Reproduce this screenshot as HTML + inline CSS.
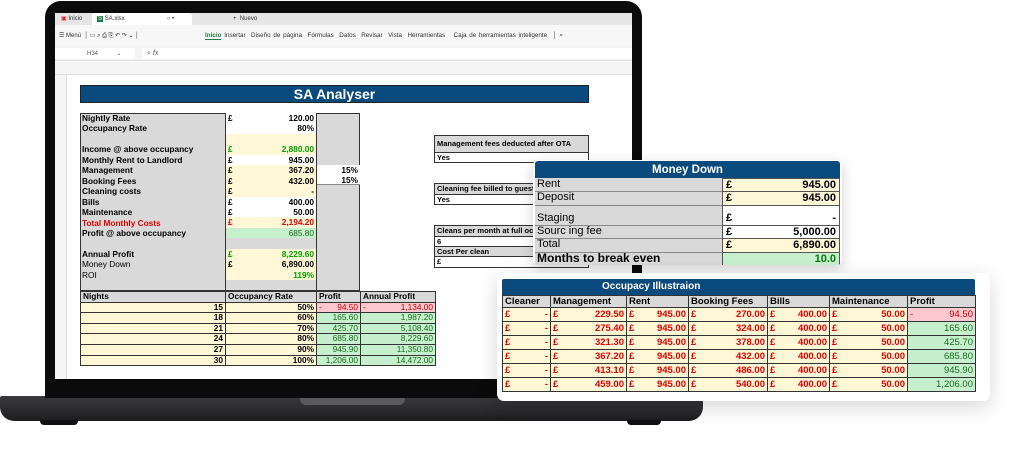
<!DOCTYPE html>
<html><head><meta charset="utf-8"><style>
*{margin:0;padding:0;box-sizing:border-box}
body{width:1035px;height:474px;background:#fff;position:relative;overflow:hidden;font-family:"Liberation Sans",Arial,sans-serif}
.a{position:absolute}
.t{font-size:8px;font-weight:bold;color:#000;white-space:nowrap;overflow:hidden;line-height:10px}
.c{position:absolute;border:1px solid #333;font-size:8.5px;font-weight:bold;line-height:9px;padding:0 2px;white-space:nowrap;overflow:hidden}
.y{background:#fff7d6}.g{background:#c6efce}.gr{background:#d9d9d9}.w{background:#fff}.pk{background:#ffc7ce}
.red{color:#e00000}.grn{color:#00a000}.dg{color:#1a6b1a}
.f{display:flex;justify-content:space-between;padding:0 2px;overflow:hidden;white-space:nowrap}
.lc div{height:10.45px;line-height:10.45px}
table{border-collapse:collapse;position:absolute}
td{border:1.5px solid #333;font-weight:bold;white-space:nowrap;padding:0 2px}
td.r{text-align:right}
td .l{float:left}
</style></head><body>
<!-- laptop base -->
<div class="a" style="left:0;top:396px;width:703px;height:25px;background:linear-gradient(#3a3a3e,#2a2a2d 60%,#1c1c1e);border-radius:2px 2px 14px 14px"></div>
<div class="a" style="left:300px;top:396px;width:105px;height:9px;background:#5a5a5e;border-radius:0 0 6px 6px"></div>
<div class="a" style="left:40px;top:420px;width:38px;height:5px;background:#111;border-radius:0 0 4px 4px"></div>
<div class="a" style="left:627px;top:420px;width:34px;height:5px;background:#111;border-radius:0 0 4px 4px"></div>
<!-- bezel -->
<div class="a" style="left:45px;top:1px;width:597px;height:397px;background:#0b0b0b;border-radius:16px 16px 0 0"></div>
<!-- screen -->
<div class="a" style="left:55px;top:13px;width:577px;height:366px;background:#fff;overflow:hidden">
 <div class="a" style="left:0;top:0;width:577px;height:12px;background:#e6e6e6"></div>
 <div class="a" style="left:37px;top:0;width:100px;height:12px;background:#fff;border-radius:3px 3px 0 0"></div>
 <div class="a t" style="left:6px;top:1px;font-size:6px;font-weight:normal;color:#333"><span style="color:#d22">▣</span> Inicio</div>
 <div class="a t" style="left:42px;top:1px;font-size:6px;font-weight:normal;color:#333"><span style="background:#1e7b45;color:#fff;padding:0 1px">S</span> SA.xlsx<span style="margin-left:42px">○ •</span></div>
 <div class="a t" style="left:178px;top:1px;font-size:6px;font-weight:normal;color:#333">+ &nbsp;Nuevo</div>
 <div class="a" style="left:0;top:12px;width:577px;height:21px;background:#f7f7f7"></div>
 <div class="a t" style="left:4px;top:18px;font-size:6px;font-weight:normal;color:#333">☰ Menú &nbsp;│ ▭ ⌕ ⎙ ⎘ ↶ ↷ ⌄ │</div>
 <div class="a t" style="left:150px;top:18px;font-size:6.3px;font-weight:normal;color:#333;word-spacing:1px"><span style="color:#1e7b45;font-weight:bold;border-bottom:1px solid #1e7b45">Inicio</span> Insertar &nbsp;Diseño de página &nbsp;Fórmulas &nbsp;Datos &nbsp;Revisar &nbsp;Vista &nbsp;Herramientas &nbsp; Caja de herramientas inteligente &nbsp;│ ⌕</div>
 <div class="a" style="left:0;top:33px;width:577px;height:15px;background:#f3f3f3;border-bottom:1px solid #ddd"></div>
 <div class="a" style="left:0;top:35px;width:80px;height:11px;background:#fff"></div>
 <div class="a" style="left:87px;top:35px;width:490px;height:11px;background:#fff"></div>
 <div class="a t" style="left:32px;top:36px;font-size:6px;font-weight:normal;color:#555">H34 &nbsp; &nbsp; &nbsp; &nbsp; &nbsp; ⌄</div>
 <div class="a t" style="left:92px;top:36px;font-size:7px;font-weight:normal;color:#555">⌕ <i>fx</i></div>
 <div class="a" style="left:0;top:49px;width:577px;height:13px;background:#f5f5f5;border-bottom:1px solid #ddd"></div>
 <div class="a t" style="left:0;top:51px;width:577px;font-size:7px;font-weight:normal;color:#444">
  <span class="a" style="left:5px">A</span><span class="a" style="left:94px">B</span><span class="a" style="left:212px">C</span><span class="a" style="left:274px">D</span><span class="a" style="left:339px">E</span><span class="a" style="left:452px">F</span></div>
 <div class="a" style="left:0;top:62px;width:12px;height:304px;background:#f5f5f5;border-right:1px solid #ddd"></div>
</div>
<!-- SA Analyser header -->
<div class="a" style="left:80px;top:85px;width:509px;height:18px;background:#0b4a7d;border:1px solid #222;color:#fff;font-weight:bold;font-size:14px;text-align:center;line-height:17px">SA Analyser</div>
<!-- left grey block -->
<div class="a gr" style="left:80px;top:113px;width:280px;height:178px;border:1px solid #333"></div>
<div class="a" style="left:225px;top:113px;width:1px;height:178px;background:#333"></div>
<div class="a" style="left:316px;top:113px;width:1px;height:178px;background:#333"></div>
<div class="a" style="left:82px;top:113px;font-size:8.3px;font-weight:bold;line-height:10.45px">Nightly Rate<br>Occupancy Rate<br>&nbsp;<br>Income @ above occupancy<br>Monthly Rent to Landlord<br>Management<br>Booking Fees<br>Cleaning costs<br>Bills<br>Maintenance<br><span class="red">Total Monthly Costs</span><br>Profit @ above occupancy<br>&nbsp;<br>Annual Profit<br><span style="font-weight:normal">Money Down<br>ROI</span></div>
<div class="a lc" style="left:226px;top:113px;width:90px;font-size:8.3px;font-weight:bold">
 <div class="w f"><span>£</span><span>120.00</span></div>
 <div class="w f"><span></span><span>80%</span></div>
 <div class="y"></div>
 <div class="y f grn"><span>£</span><span>2,880.00</span></div>
 <div class="w f"><span>£</span><span>945.00</span></div>
 <div class="y f"><span>£</span><span>367.20</span></div>
 <div class="y f"><span>£</span><span>432.00</span></div>
 <div class="y f"><span>£</span><span>-</span></div>
 <div class="w f"><span>£</span><span>400.00</span></div>
 <div class="w f"><span>£</span><span>50.00</span></div>
 <div class="y f red"><span>£</span><span>2,194.20</span></div>
 <div class="g f dg" style="font-weight:normal"><span></span><span>685.80</span></div>
 <div></div>
 <div class="y f grn"><span>£</span><span>8,229.60</span></div>
 <div class="y f"><span>£</span><span>6,890.00</span></div>
 <div class="y f grn"><span></span><span>119%</span></div>
</div>
<div class="a w" style="left:317px;top:165px;width:43px;height:20px;font-size:8.3px;font-weight:bold;line-height:10px;padding-right:2px;text-align:right;border-bottom:1px solid #888">15%<br>15%</div>
<!-- bottom table -->
<table style="left:80px;top:291px;font-size:8.3px;line-height:9.6px">
<tr class="gr"><td style="width:145px">Nights</td><td style="width:91px">Occupancy Rate</td><td style="width:44px">Profit</td><td style="width:75px">Annual Profit</td></tr>
<tr><td class="y r">15</td><td class="y r">50%</td><td class="pk r" style="font-weight:normal;color:#c00"><span class="l">-</span>94.50</td><td class="pk r" style="font-weight:normal;color:#c00"><span class="l">-</span>1,134.00</td></tr>
<tr><td class="y r">18</td><td class="y r">60%</td><td class="g r dg" style="font-weight:normal">165.60</td><td class="g r dg" style="font-weight:normal">1,987.20</td></tr>
<tr><td class="y r">21</td><td class="y r">70%</td><td class="g r dg" style="font-weight:normal">425.70</td><td class="g r dg" style="font-weight:normal">5,108.40</td></tr>
<tr><td class="y r">24</td><td class="y r">80%</td><td class="g r dg" style="font-weight:normal">685.80</td><td class="g r dg" style="font-weight:normal">8,229.60</td></tr>
<tr><td class="y r">27</td><td class="y r">90%</td><td class="g r dg" style="font-weight:normal">945.90</td><td class="g r dg" style="font-weight:normal">11,350.80</td></tr>
<tr><td class="y r">30</td><td class="y r">100%</td><td class="g r dg" style="font-weight:normal">1,206.00</td><td class="g r dg" style="font-weight:normal">14,472.00</td></tr>
</table>
<!-- right side boxes -->
<div class="c gr" style="left:434px;top:135px;width:155px;height:18px;font-size:7.5px;line-height:16px">Management fees deducted after OTA</div>
<div class="c w" style="left:434px;top:152px;width:155px;height:11px;font-size:7.5px">Yes</div>
<div class="c gr" style="left:434px;top:183px;width:155px;height:12px;font-size:7.5px">Cleaning fee billed to guest</div>
<div class="c w" style="left:434px;top:194px;width:155px;height:11px;font-size:7.5px">Yes</div>
<div class="c gr" style="left:434px;top:225px;width:155px;height:12px;font-size:7.5px">Cleans per month at full occupancy</div>
<div class="c w" style="left:434px;top:236px;width:155px;height:11px;font-size:7.5px">6</div>
<div class="c gr" style="left:434px;top:246px;width:155px;height:11px;font-size:7.5px">Cost Per clean</div>
<div class="c w" style="left:434px;top:256px;width:155px;height:12px;font-size:7.5px">£</div>
<!-- Money Down panel -->
<div class="a" style="left:533px;top:160px;width:309px;height:105px;background:#fff;border-radius:5px;box-shadow:0 4px 14px rgba(0,0,0,.18);overflow:hidden">
 <div class="a" style="left:2px;top:1px;width:305px;height:17px;background:#0b4a7d;color:#fff;font-weight:bold;font-size:11.5px;text-align:center;line-height:18px;border-radius:3px 3px 0 0">Money Down</div>
 <div class="a" style="left:2px;top:18px;width:187px;height:87px;background:#d9d9d9"></div>
 <div class="a" style="left:2px;top:31px;width:187px;height:1px;background:#888"></div>
 <div class="a" style="left:2px;top:45px;width:187px;height:1px;background:#888"></div>
 <div class="a" style="left:2px;top:65px;width:187px;height:1px;background:#888"></div>
 <div class="a" style="left:2px;top:78px;width:187px;height:1px;background:#888"></div>
 <div class="a" style="left:2px;top:92px;width:187px;height:1px;background:#888"></div>
 <div class="a" style="left:4px;top:18px;font-size:11px;line-height:13.5px">Rent</div>
 <div class="a" style="left:4px;top:31px;font-size:11px;line-height:13.5px">Deposit</div>
 <div class="a" style="left:4px;top:52px;font-size:11px;line-height:13.5px">Staging</div>
 <div class="a" style="left:4px;top:65px;font-size:11px;line-height:13.5px">Sourc ing fee</div>
 <div class="a" style="left:4px;top:78px;font-size:11px;line-height:13.5px">Total</div>
 <div class="a" style="left:4px;top:92px;font-size:12px;font-weight:bold;line-height:13px">Months to break even</div>
 <div class="a" style="left:189px;top:18px;width:118px;font-size:11px;font-weight:bold;line-height:13.5px">
  <div class="y f" style="height:14px;border:1px solid #555;padding:0 3px"><span>£</span><span>945.00</span></div>
  <div class="y f" style="height:14px;border:1px solid #555;border-top:0;padding:0 3px"><span>£</span><span>945.00</span></div>
  <div class="w f" style="height:20px;border:1px solid #555;border-top:0;padding:6px 3px 0"><span>£</span><span>-</span></div>
  <div class="w f" style="height:13px;border:1px solid #555;border-top:0;padding:0 3px;line-height:12px"><span>£</span><span>5,000.00</span></div>
  <div class="y f" style="height:14px;border:1px solid #555;border-top:0;padding:0 3px"><span>£</span><span>6,890.00</span></div>
  <div class="g f" style="height:14px;border:1px solid #555;border-top:0;padding:0 3px;color:#0a7a0a"><span></span><span>10.0</span></div>
 </div>
</div>
<!-- Occupancy panel -->
<div class="a" style="left:497px;top:273px;width:493px;height:128px;background:#fff;border-radius:7px;box-shadow:0 6px 20px rgba(0,0,0,.16)"></div>
<div class="a" style="left:502px;top:279px;width:473px;height:16px;background:#0b4a7d;color:#fff;font-weight:bold;font-size:10px;line-height:16px;padding-left:100px;border-radius:2px 2px 0 0">Occupacy Illustraion</div>
<table style="left:502px;top:295px;font-size:9.5px;line-height:11px" class="red">
<tr class="gr" style="color:#000"><td style="width:48px">Cleaner</td><td style="width:76px">Management</td><td style="width:62px">Rent</td><td style="width:79px">Booking Fees</td><td style="width:62px">Bills</td><td style="width:78px">Maintenance</td><td style="width:68px">Profit</td></tr>
<tr class="y" style="height:14px"><td class="r"><span class="l">£</span>-</td><td class="r"><span class="l">£</span>229.50</td><td class="r"><span class="l">£</span>945.00</td><td class="r"><span class="l">£</span>270.00</td><td class="r"><span class="l">£</span>400.00</td><td class="r"><span class="l">£</span>50.00</td><td class="r pk" style="font-weight:normal;color:#c00"><span class="l">-</span>94.50</td></tr>
<tr class="y" style="height:14px"><td class="r"><span class="l">£</span>-</td><td class="r"><span class="l">£</span>275.40</td><td class="r"><span class="l">£</span>945.00</td><td class="r"><span class="l">£</span>324.00</td><td class="r"><span class="l">£</span>400.00</td><td class="r"><span class="l">£</span>50.00</td><td class="r g dg" style="font-weight:normal">165.60</td></tr>
<tr class="y" style="height:14px"><td class="r"><span class="l">£</span>-</td><td class="r"><span class="l">£</span>321.30</td><td class="r"><span class="l">£</span>945.00</td><td class="r"><span class="l">£</span>378.00</td><td class="r"><span class="l">£</span>400.00</td><td class="r"><span class="l">£</span>50.00</td><td class="r g dg" style="font-weight:normal">425.70</td></tr>
<tr class="y" style="height:14px"><td class="r"><span class="l">£</span>-</td><td class="r"><span class="l">£</span>367.20</td><td class="r"><span class="l">£</span>945.00</td><td class="r"><span class="l">£</span>432.00</td><td class="r"><span class="l">£</span>400.00</td><td class="r"><span class="l">£</span>50.00</td><td class="r g dg" style="font-weight:normal">685.80</td></tr>
<tr class="y" style="height:14px"><td class="r"><span class="l">£</span>-</td><td class="r"><span class="l">£</span>413.10</td><td class="r"><span class="l">£</span>945.00</td><td class="r"><span class="l">£</span>486.00</td><td class="r"><span class="l">£</span>400.00</td><td class="r"><span class="l">£</span>50.00</td><td class="r g dg" style="font-weight:normal">945.90</td></tr>
<tr class="y" style="height:14px"><td class="r"><span class="l">£</span>-</td><td class="r"><span class="l">£</span>459.00</td><td class="r"><span class="l">£</span>945.00</td><td class="r"><span class="l">£</span>540.00</td><td class="r"><span class="l">£</span>400.00</td><td class="r"><span class="l">£</span>50.00</td><td class="r g dg" style="font-weight:normal">1,206.00</td></tr>
</table>
</body></html>
